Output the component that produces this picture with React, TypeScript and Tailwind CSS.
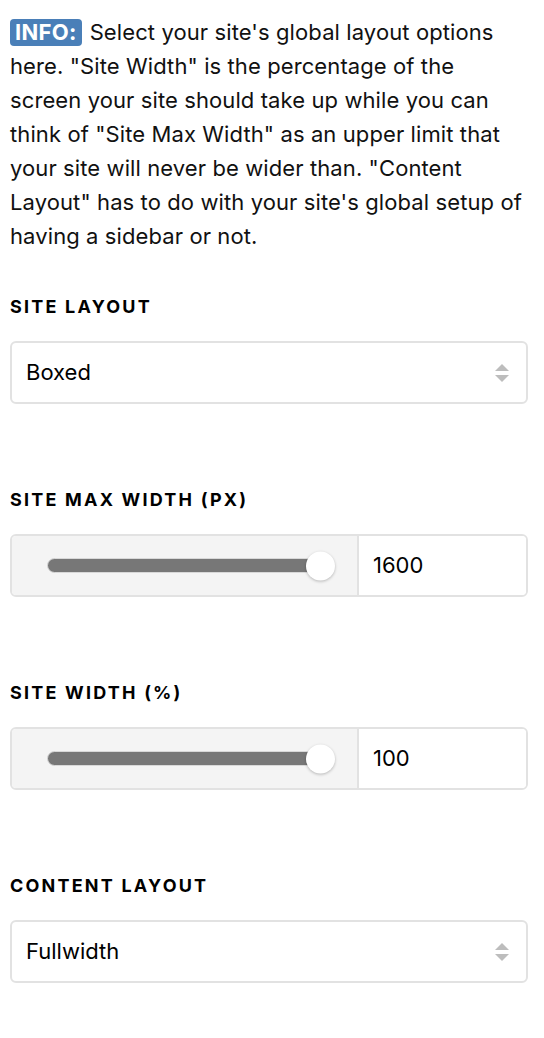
import React from "react";

const font = { fontFamily: "Inter, 'Noto Sans', sans-serif" };

function Heading({ children }: { children: React.ReactNode }) {
  return (
    <h3 className="text-[18px] font-bold tracking-[2.2px] uppercase text-black leading-[20px] mb-[24px]">
      {children}
    </h3>
  );
}

function SelectBox({ value }: { value: string }) {
  return (
    <div className="flex items-center justify-between h-[63px] rounded-[6px] border-2 border-[#e2e2e2] bg-white pl-[14px] pr-[16px]">
      <span className="text-[22px] text-black">{value}</span>
      <svg width="16" height="22" viewBox="0 0 16 22">
        <path d="M8 2 L15 9 L1 9 Z" fill="#bdbdbd" />
        <path d="M1 13 L15 13 L8 20 Z" fill="#bdbdbd" />
      </svg>
    </div>
  );
}

function SliderBox({ value }: { value: string }) {
  return (
    <div className="flex h-[63px] rounded-[6px] border-2 border-[#e2e2e2] overflow-hidden">
      <div className="w-[347px] bg-[#f4f4f4] border-r-2 border-[#e2e2e2] flex items-center pl-[35px] pr-[35px]">
        <div className="relative flex-1 h-[15px] rounded-full bg-[#777] border border-[#d8d8d8]">
          <div className="absolute right-[-14px] top-1/2 -translate-y-1/2 w-[29px] h-[29px] rounded-full bg-white shadow-[0_1px_3px_rgba(0,0,0,0.25)]" />
        </div>
      </div>
      <div className="flex-1 bg-white flex items-center pl-[14px] text-[22px] text-black">
        {value}
      </div>
    </div>
  );
}

export default function App() {
  return (
    <div className="bg-white min-h-[1038px] pl-[10px] pr-[16px] pt-[15px] text-black" style={font}>
      <p className="mr-[5px] text-[22px] leading-[34px] tracking-[0.1px] text-[#111]">
        <span className="inline-block bg-[#4a7fb8] text-white font-bold rounded-[4px] px-[5px] leading-[27px] mr-[8px] tracking-[0.3px]">
          INFO:
        </span>
        Select your site's global layout options here. "Site Width" is the percentage of the screen your site should take up while you can think of "Site Max Width" as an upper limit that your site will never be wider than. "Content Layout" has to do with your site's global setup of having a sidebar or not.
      </p>

      <div className="mt-[44px]">
        <Heading>Site Layout</Heading>
        <SelectBox value="Boxed" />
      </div>

      <div className="mt-[86px]">
        <Heading>Site Max Width (px)</Heading>
        <SliderBox value="1600" />
      </div>

      <div className="mt-[86px]">
        <Heading>Site Width (%)</Heading>
        <SliderBox value="100" />
      </div>

      <div className="mt-[86px]">
        <Heading>Content Layout</Heading>
        <SelectBox value="Fullwidth" />
      </div>
    </div>
  );
}
